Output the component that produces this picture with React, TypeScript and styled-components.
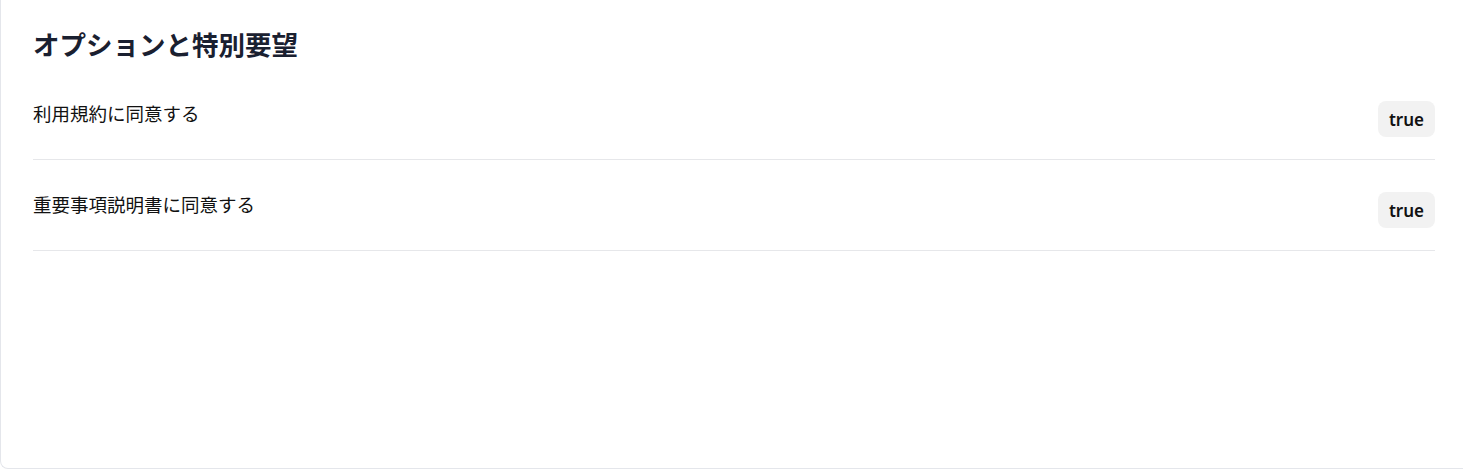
import React from "react";
import styled, { createGlobalStyle } from "styled-components";

const GlobalStyle = createGlobalStyle`
  html, body {
    margin: 0;
    padding: 0;
    background: #fff;
  }
  body {
    font-family: "Noto Sans CJK JP", "Noto Sans", sans-serif;
    overflow: hidden;
  }
`;

const items = [
  { label: "利用規約に同意する", value: "true" },
  { label: "重要事項説明書に同意する", value: "true" },
];

const App = () => {
  return (
    <>
      <GlobalStyle />
      <Card>
        <Title>オプションと特別要望</Title>
        <List>
          {items.map((item) => (
            <Row key={item.label}>
              <Label>{item.label}</Label>
              <Badge>{item.value}</Badge>
            </Row>
          ))}
        </List>
      </Card>
    </>
  );
};

export default App;

const Card = styled.div`
  box-sizing: border-box;
  height: 469px;
  padding: 26px 28px 0 32px;
  border-left: 1px solid #e4e6eb;
  border-bottom: 1px solid #e4e6eb;
  border-bottom-left-radius: 8px;
  background: #fff;
`;

const Title = styled.h2`
  margin: 0;
  font-size: 26.5px;
  line-height: 36px;
  font-weight: 700;
  color: #1a2030;
`;

const List = styled.div`
  display: flex;
  flex-direction: column;
  margin-top: 7px;
`;

const Row = styled.div`
  display: flex;
  justify-content: space-between;
  align-items: flex-start;
  padding: 32px 0 22px;
  border-bottom: 1px solid #e6e7ea;
`;

const Label = styled.div`
  margin-top: 0;
  font-size: 18.5px;
  line-height: 24px;
  color: #111;
`;

const Badge = styled.span`
  display: inline-flex;
  align-items: center;
  height: 36px;
  padding: 0 11px;
  border-radius: 8px;
  background: #f2f2f2;
  font-family: "Noto Sans", sans-serif;
  font-size: 17px;
  font-weight: 600;
  color: #111;
`;
